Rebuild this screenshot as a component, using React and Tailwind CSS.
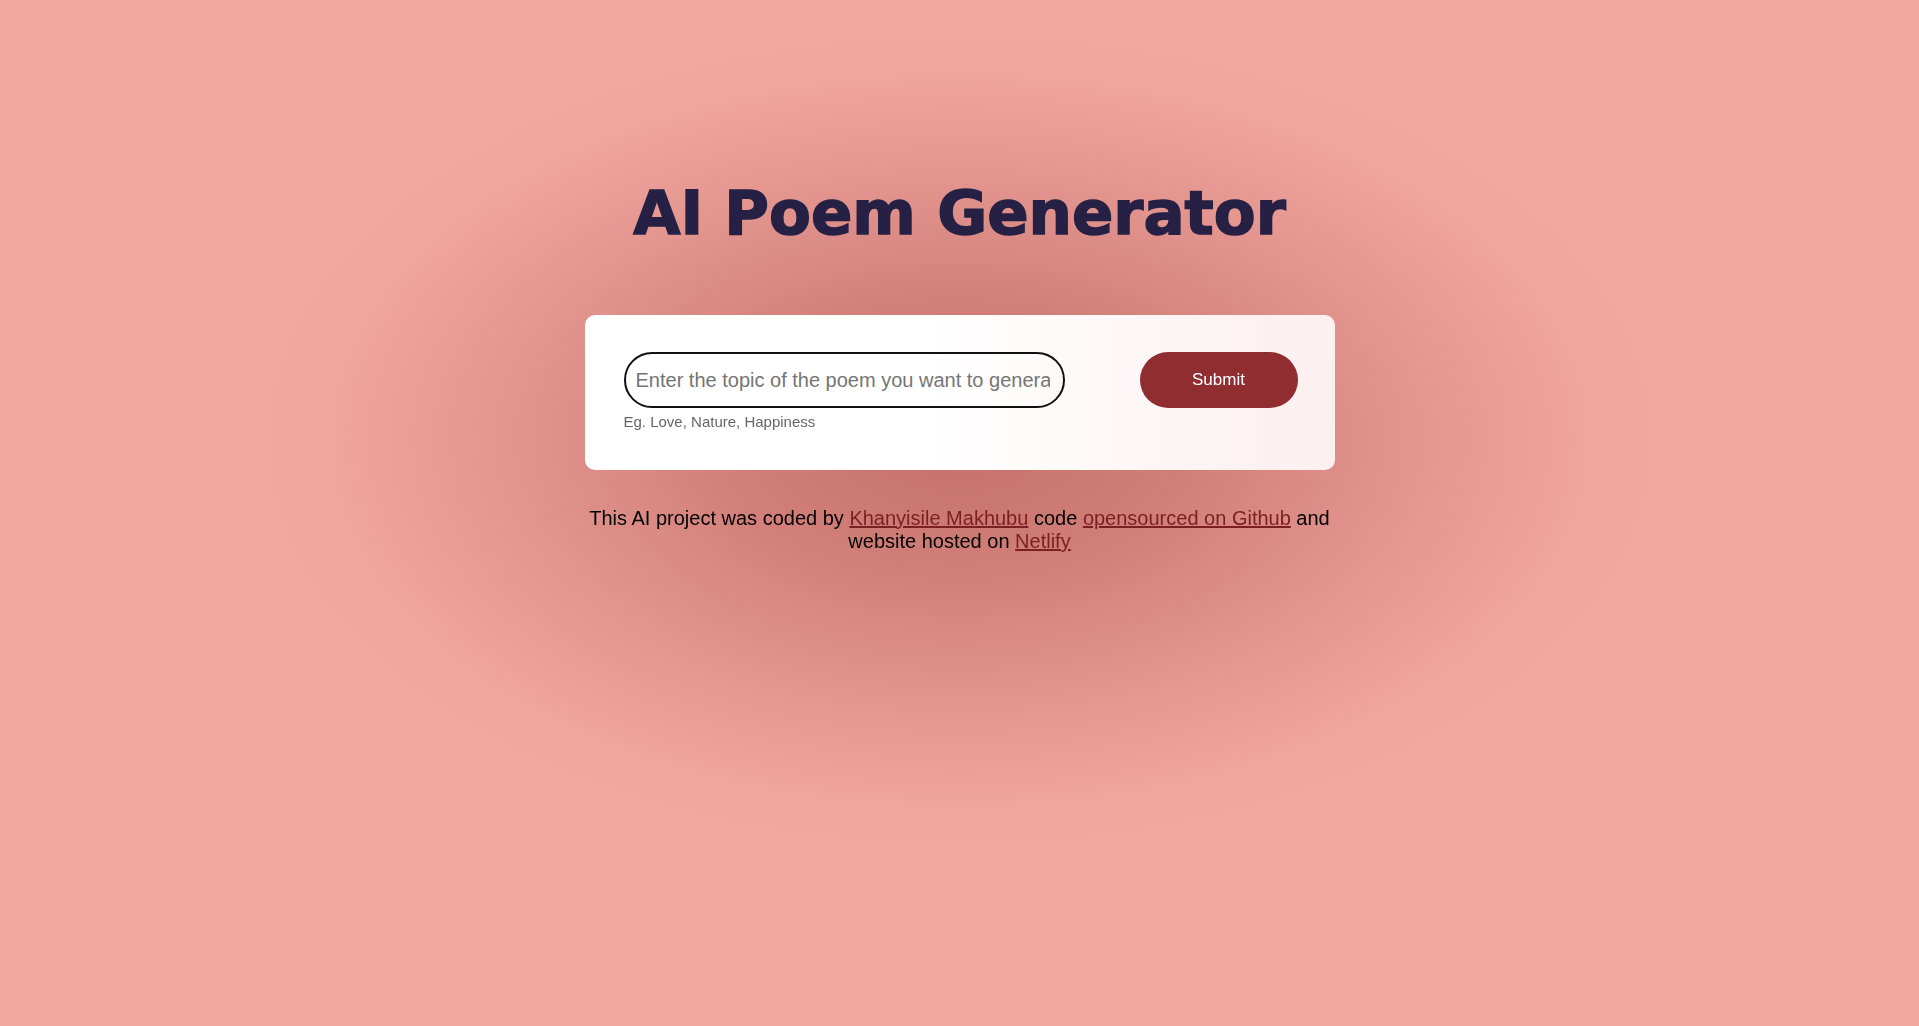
import { useState } from 'react';

const sans = 'font-["Liberation_Sans",Arial,sans-serif]';

function PoemForm() {
  const [topic, setTopic] = useState('');

  const handleSubmit = (e) => {
    e.preventDefault();
  };

  return (
    <form
      onSubmit={handleSubmit}
      className="w-[750px] h-[155px] rounded-[10px] pt-[37px] pl-[39px] pr-[37px] bg-[linear-gradient(to_right,#ffffff_45%,#fcefef)]"
    >
      <div className="flex items-start justify-between">
        <div className="flex flex-col">
          <input
            type="text"
            autoFocus
            value={topic}
            onChange={(e) => setTopic(e.target.value)}
            placeholder="Enter the topic of the poem you want to generate"
            className={`w-[441px] h-[56px] rounded-full border-2 border-[#111] bg-transparent pl-[10px] pr-[13px] text-[20px] text-[#222] placeholder:text-[#757575] caret-[#e06060] outline-none ${sans}`}
          />
          {/* hint under the field */}
          <span className={`mt-[5px] text-[15px] leading-[17px] text-[#666] ${sans}`}>
            Eg. Love, Nature, Happiness
          </span>
        </div>
        <button
          type="submit"
          className={`w-[158px] h-[56px] rounded-full bg-[#8f2d30] text-white text-[17px] ${sans}`}
        >
          Submit
        </button>
      </div>
    </form>
  );
}

export default function App() {
  return (
    <div className="min-h-screen h-[1026px] overflow-hidden bg-[#f2a8a0] bg-[radial-gradient(ellipse_720px_420px_at_50%_440px,#c6716b_0%,#d27f79_33%,#dd8d87_52%,#e89b94_72%,#f0a59e_88%,#f2a8a0_100%)] flex flex-col items-center pt-[177px]">
      <h1 className='text-[61px] leading-[72px] font-bold text-[#262144] [-webkit-text-stroke:1.5px_#262144] font-["DejaVu_Sans",sans-serif]'>
        AI Poem Generator
      </h1>

      <div className="mt-[66px]">
        <PoemForm />
      </div>

      <p className={`w-[750px] mt-[37px] text-center text-[20px] leading-[23px] text-black ${sans}`}>
        This AI project was coded by{' '}
        <a href="#" className="text-[#7b1f22] underline">Khanyisile Makhubu</a> code{' '}
        <a href="#" className="text-[#7b1f22] underline">opensourced on Github</a> and website hosted on{' '}
        <a href="#" className="text-[#7b1f22] underline">Netlify</a>
      </p>
    </div>
  );
}
